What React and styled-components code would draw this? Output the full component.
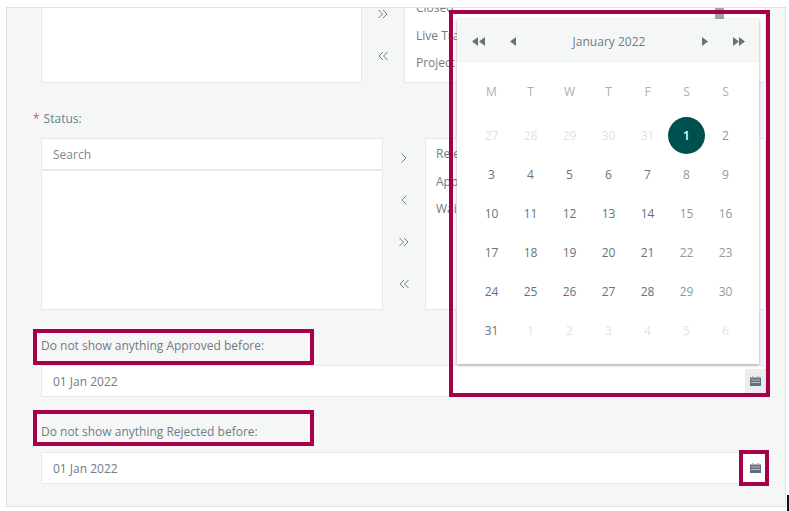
import styled, { createGlobalStyle } from "styled-components";

const GlobalStyle = createGlobalStyle`
  html, body {
    margin: 0;
    background: #fff;
    font-family: "Open Sans", "Noto Sans", sans-serif;
  }
`;

const Screen = styled.div`
  position: relative;
  width: 789px;
  height: 511px;
  padding: 7px 3px 4px 6px;
  box-sizing: border-box;
  overflow: hidden;
`;

const Panel = styled.div`
  position: relative;
  height: 500px;
  box-sizing: border-box;
  padding: 0 19px 0 34px;
  background: #f5f7f7;
  border: 1px solid #dfe2e2;
  overflow: hidden;
`;

const TopTransfer = styled.div`
  display: grid;
  grid-template-columns: 321px 42px 1fr;
  height: 75px;
  margin-bottom: 25px;
`;

const StatusTransfer = styled.div`
  display: grid;
  grid-template-columns: 342px 42px 1fr;
  height: 172px;
  margin-bottom: 26px;
`;

const Column = styled.div`
  display: flex;
  flex-direction: column;
`;

const Box = styled.div`
  flex: 1;
  background: #fff;
  border: 1px solid #e6e8e8;
  border-radius: 2px;
  box-sizing: border-box;
  overflow: hidden;
`;

const TopBox = styled(Box)`
  margin-top: -15px;
`;

const TopList = styled(TopBox)`
  padding-left: 11px;
`;

const StatusList = styled(Box)`
  padding: 1px 0 0 10px;
`;

const ListItem = styled.div`
  height: 27.5px;
  line-height: 27.5px;
  font-size: 12px;
  color: #6f7c86;
  white-space: nowrap;
`;

const Search = styled.div`
  height: 32px;
  box-sizing: border-box;
  padding-left: 11px;
  line-height: 31px;
  font-size: 12px;
  color: #7d8890;
  background: #fff;
  border: 1px solid #e6e8e8;
  border-radius: 2px;
`;

const Arrows = styled.div`
  display: flex;
  flex-direction: column;
  align-items: center;
  gap: 30px;
  padding-top: ${(p) => p.$top}px;
`;

const ArrowIcon = styled.svg`
  display: block;
  width: 12px;
  height: 12px;
  fill: none;
  stroke: #6f7c86;
  stroke-width: 1;
`;

const StatusLabel = styled.div`
  height: 30px;
  margin-left: -8px;
  padding-top: 1px;
  box-sizing: border-box;
  font-size: 12px;
  line-height: 20px;
  color: #6f7c86;
`;

const Required = styled.span`
  margin-right: 4px;
  color: #e8504a;
`;

const DateLabel = styled.div`
  height: ${(p) => p.$h}px;
  font-size: 12px;
  line-height: 20px;
  color: #6f7c86;
`;

const DateField = styled.div`
  display: flex;
  align-items: center;
  justify-content: space-between;
  height: 32px;
  box-sizing: border-box;
  padding: 2px 0 2px 11px;
  margin-bottom: 25px;
  background: #fff;
  border: 1px solid #e6e8e8;
  border-radius: 2px;
  font-size: 12px;
  color: #6f7c86;
`;

const CalendarButton = styled.div`
  display: flex;
  align-items: center;
  justify-content: center;
  width: 20px;
  height: 25px;
  background: ${(p) => (p.$active ? "#e9edee" : "#fff")};
`;

const Thumb = styled.div`
  position: absolute;
  top: 0;
  left: 708px;
  width: 9px;
  height: 12px;
  background: #9ca8a8;
`;

const Popover = styled.div`
  position: absolute;
  top: 11px;
  left: 450px;
  width: 302px;
  height: 345px;
  background: #fff;
  box-shadow: 0 1px 3px rgba(60, 70, 70, 0.45);
`;

const PopoverHeader = styled.div`
  display: grid;
  grid-template-columns: 42px 28px 1fr 26px 42px;
  align-items: center;
  justify-items: center;
  height: 44px;
  background: #f5f7f7;
  font-size: 12px;
  color: #6f7c86;
`;

const CalendarGrid = styled.div`
  display: grid;
  grid-template-columns: repeat(7, 39px);
  grid-template-rows: 49px repeat(6, 39px);
  justify-items: center;
  align-items: center;
  padding: 4px 13px 0 15px;
  font-size: 12px;
`;

const WeekDay = styled.div`
  color: #a9b1b7;
`;

const Day = styled.div`
  display: flex;
  align-items: center;
  justify-content: center;
  width: 37px;
  height: 37px;
  border-radius: 50%;
  color: ${(p) =>
    p.$selected ? "#fff" : p.$muted ? "#e0e3e5" : p.$weekend ? "#8e99a1" : "#66737d"};
  background: ${(p) => (p.$selected ? "#00504f" : "transparent")};
  font-weight: ${(p) => (p.$selected ? 600 : 400)};
`;

const Highlight = styled.div`
  position: absolute;
  left: ${(p) => p.$x}px;
  top: ${(p) => p.$y}px;
  width: ${(p) => p.$w}px;
  height: ${(p) => p.$h}px;
  box-sizing: border-box;
  border: 4px solid #a5004a;
`;

const CursorMark = styled.div`
  position: absolute;
  left: 787px;
  top: 495px;
  width: 2px;
  height: 16px;
  background: #111;
`;

const Chevron = ({ dir }) => (
  <ArrowIcon viewBox="0 0 12 12">
    <path d={dir === "right" ? "M3.5 1.5 8 6l-4.500 4.500" : "M8.500 1.500 4 6l4.500 4.500"} />
  </ArrowIcon>
);

const Double = ({ dir }) => (
  <ArrowIcon viewBox="0 0 12 12">
    {dir === "right" ? (
      <path d="M1.500 2 5.500 6l-4 4M6 2l4 4-4 4" />
    ) : (
      <path d="M10.500 2 6.500 6l4 4M6 2 2 6l4 4" />
    )}
  </ArrowIcon>
);

const Triangles = ({ count, dir }) => (
  <svg width={count === 2 ? 13 : 7} height="9" viewBox={count === 2 ? "0 0 13 9" : "0 0 7 9"} fill="#66737d">
    {dir === "left" ? (
      <>
        <path d="M0 4.500 6 0v9z" />
        {count === 2 && <path d="M7 4.500 13 0v9z" />}
      </>
    ) : (
      <>
        <path d="M7 4.500 1 0v9z" />
        {count === 2 && <path d="M13 4.500 7 0v9z" />}
      </>
    )}
  </svg>
);

const CalendarIcon = () => (
  <svg width="11" height="10" viewBox="0 0 11 10">
    <path d="M0 1.500h11V10H0z" fill="#5f6f80" />
    <path d="M2 0h1.500v1.500H2zM7.500 0H9v1.500H7.500z" fill="#c9a08a" />
    <path d="M1 3.500h9v1H1zM1 6h9v1H1z" fill="#b7c0c8" />
  </svg>
);

const weekDays = ["M", "T", "W", "T", "F", "S", "S"];

const days = [
  [27, 1], [28, 1], [29, 1], [30, 1], [31, 1], [1, 0], [2, 0],
  [3, 0], [4, 0], [5, 0], [6, 0], [7, 0], [8, 0], [9, 0],
  [10, 0], [11, 0], [12, 0], [13, 0], [14, 0], [15, 0], [16, 0],
  [17, 0], [18, 0], [19, 0], [20, 0], [21, 0], [22, 0], [23, 0],
  [24, 0], [25, 0], [26, 0], [27, 0], [28, 0], [29, 0], [30, 0],
  [31, 0], [1, 1], [2, 1], [3, 1], [4, 1], [5, 1], [6, 1],
];

function App() {
  return (
    <>
      <GlobalStyle />
      <Screen>
        <Panel>
          <TopTransfer>
            <TopBox />
            <Arrows $top={0}>
              <Double dir="right" />
              <Double dir="left" />
            </Arrows>
            <TopList>
              <ListItem>Closed</ListItem>
              <ListItem>Live Tracking</ListItem>
              <ListItem>Project</ListItem>
            </TopList>
          </TopTransfer>

          <StatusLabel>
            <Required>*</Required>Status:
          </StatusLabel>

          <StatusTransfer>
            <Column>
              <Search>Search</Search>
              <Box />
            </Column>
            <Arrows $top={14}>
              <Chevron dir="right" />
              <Chevron dir="left" />
              <Double dir="right" />
              <Double dir="left" />
            </Arrows>
            <StatusList>
              <ListItem>Rejected</ListItem>
              <ListItem>Approved</ListItem>
              <ListItem>Waiting</ListItem>
            </StatusList>
          </StatusTransfer>

          <DateLabel $h={29}>Do not show anything Approved before:</DateLabel>
          <DateField>
            01 Jan 2022
            <CalendarButton $active>
              <CalendarIcon />
            </CalendarButton>
          </DateField>

          <DateLabel $h={30}>Do not show anything Rejected before:</DateLabel>
          <DateField>
            01 Jan 2022
            <CalendarButton>
              <CalendarIcon />
            </CalendarButton>
          </DateField>

          <Thumb />
          <Popover>
            <PopoverHeader>
              <Triangles count={2} dir="left" />
              <Triangles count={1} dir="left" />
              <span>January 2022</span>
              <Triangles count={1} dir="right" />
              <Triangles count={2} dir="right" />
            </PopoverHeader>
            <CalendarGrid>
              {weekDays.map((d, i) => (
                <WeekDay key={i}>{d}</WeekDay>
              ))}
              {days.map(([n, muted], i) => (
                <Day key={i} $muted={!!muted} $weekend={i % 7 > 4} $selected={i === 5}>
                  {n}
                </Day>
              ))}
            </CalendarGrid>
          </Popover>
        </Panel>

        <Highlight $x={33} $y={329} $w={281} $h={36} />
        <Highlight $x={33} $y={410} $w={281} $h={36} />
        <Highlight $x={449} $y={10} $w={321} $h={387} />
        <Highlight $x={739} $y={450} $w={30} $h={36} />
        <CursorMark />
      </Screen>
    </>
  );
}

export default App;
